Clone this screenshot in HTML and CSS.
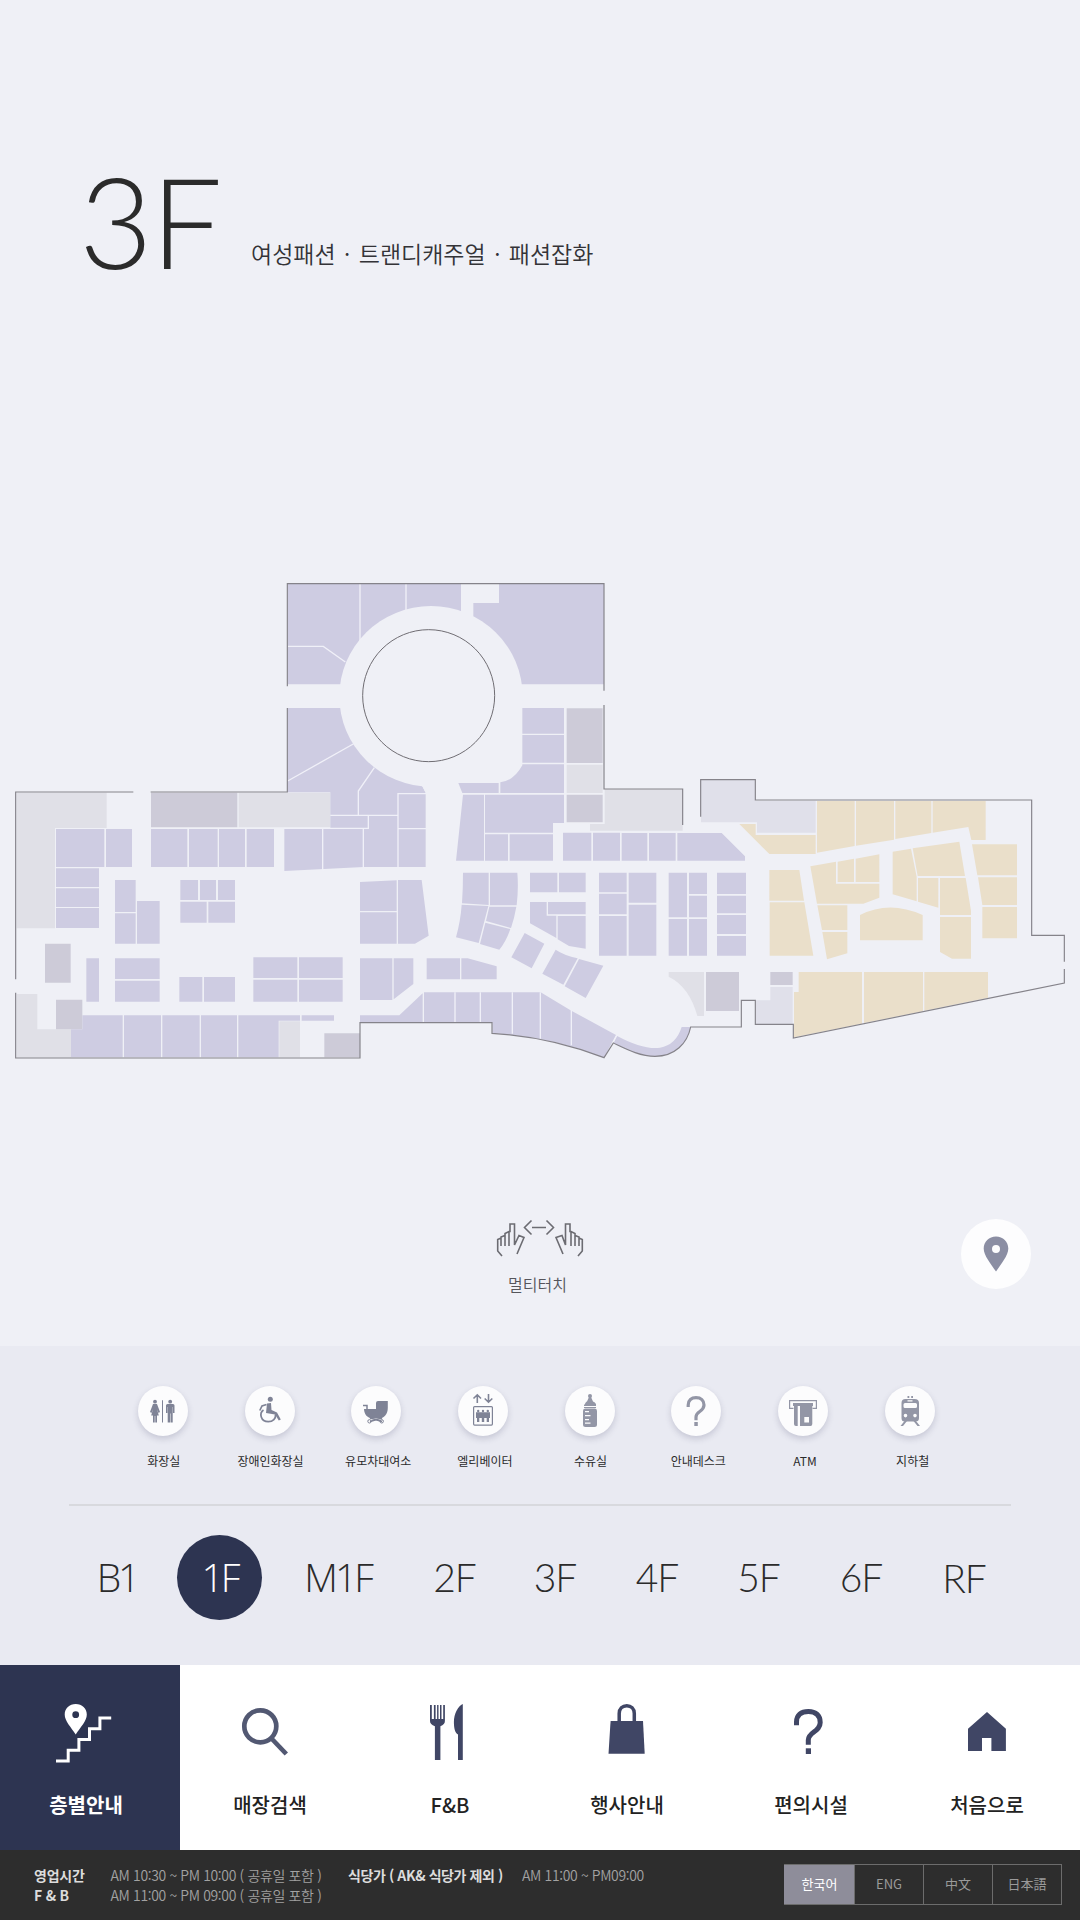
FILE: index.html
```html
<!DOCTYPE html>
<html lang="ko">
<head>
<meta charset="utf-8">
<title>층별안내 3F</title>
<link rel="stylesheet" href="styles.css">
</head>
<body>
<main class="kiosk">
  <header class="head">
    <h1 class="head-floor">3F</h1>
    <p class="head-desc">여성패션 · 트랜디캐주얼 · 패션잡화</p>
  </header>

  <svg class="map" viewBox="0 0 3240 1500">
    <!-- west wing: service areas -->
    <path class="lite" d="M50 668H320V774H165V1075H50ZM50 1272H112V1378H213V1463H50ZM716 668H991V772H716ZM838 1354H900V1462H838Z"/>
    <path class="dark" d="M453 668H712V772H453ZM135 1121H212V1238H135ZM168 1289H247V1378H168ZM973 1390H1080V1462H973Z"/>
    <!-- west wing: shops -->
    <path class="shop" d="M168 777H313V891H168ZM318 777H396V891H318ZM168 895H297V951H168ZM168 955H297V1011H168ZM168 1014H297V1074H168Z
      M453 777H562V891H453ZM567 777H653V891H567ZM657 777H735V891H657ZM740 777H822V891H740Z
      M345 930H407V1026H345ZM345 1030H407V1121H345ZM411 993H479V1121H411Z
      M541 930H594V990H541ZM600 930H648V990H600ZM654 930H705V990H654ZM541 995H620V1058H541ZM625 995H705V1058H625Z
      M259 1165H297V1295H259ZM345 1165H479V1227H345ZM345 1232H479V1295H345ZM538 1221H607V1295H538ZM612 1221H705V1295H612Z
      M760 1162H892V1224H760ZM897 1162H1028V1224H897ZM760 1229H892V1295H760ZM897 1229H1028V1295H897Z
      M247 1336H368V1462H213V1378H247ZM372 1336H483V1462H372ZM487 1336H599V1462H487ZM603 1336H711V1462H603ZM715 1336H900V1352H836V1462H715ZM905 1336H1002V1352H905Z"/>
    <!-- rotunda block -->
    <path class="shop" d="M863 42H1383V343H863ZM1497 42H1812V343H1420V99H1497ZM863 414H1265V645L1277 668V891H1091L853 903V777H991V667H863Z"/>
    <path class="gap" d="M863 229H970L1036 276M1080 42V215M1218 42V125M863 633L1065 519M1123 593L1075 663V735M991 736H1192M1105 738V775H991M853 775H991M968 777V902M1090 775V896M1194 893V671H1279M1195 776H1279"/>
    <ellipse class="floor" cx="1293" cy="379" rx="275" ry="271"/>
    <path class="floor" d="M1265 600H1400V668H1277L1265 645Z"/>
    <g transform="translate(990 0)">
      <path class="dark" d="M710 415H818V579H710ZM710 674H818V757H710Z"/>
      <path class="lite" d="M710 584H818V669H710ZM824 657H1058V782H780V762H824Z"/>
      <path class="shop" d="M577 414H702V491H577ZM577 495H702V578H577ZM577 583H702V669H511V637Q552 632 577 586ZM385 639H506V669H397ZM399 674H462V872H378ZM465 674H702V759H669V788H465ZM465 793H534V872H465ZM539 793H669V872H539Z
        M699 788H784V872H699ZM789 788H870V872H789Z
        M90 936L200 931V1023H90ZM90 1027H200V1121H90ZM204 930H275L296 1097L255 1121H204Z
        M399 908H476V1005L396 1000Q399 955 399 908ZM480 908H562Q566 955 560 1006H480ZM395 1004L475 1008L446 1119L378 1102Q392 1050 395 1004ZM478 1010H559Q553 1045 543 1074L468 1053ZM466 1058L541 1077Q528 1115 508 1139L450 1122Z
        M600 908H682V967H600ZM687 908H767V967H687ZM600 996H650V1037H679V1104L600 1060ZM654 996H767V1033H654ZM683 1038H767V1136L717 1128L683 1108Z
        M807 908H890V967H807ZM807 971H890V1033H807ZM807 1038H890V1157H807Z
        M584 1089L643 1121L605 1195L544 1162ZM677 1139Q700 1155 743 1165L700 1244L637 1211ZM747 1167L820 1187L767 1284L704 1249Z
        M90 1165H187V1290H90ZM191 1165H250V1242L191 1288ZM290 1165H390V1228H290ZM394 1165H413L500 1189V1228H394Z
        M90 1336H208L278 1270V1356H90ZM282 1267H632L724 1322L858 1395L822 1463Q660 1400 487 1390V1358H282Z"/>
      <path class="gap" d="M375 1267V1356M451 1267V1356M547 1267V1391M631 1267V1406M724 1320V1426"/>
      <circle class="wall ring" cx="296" cy="377" r="198"/>
    </g>
    <g transform="translate(1800 570)">
      <path class="lite" d="M206 636H312V768H292Q268 680 206 650Z"/>
      <path class="lite cool" d="M303 60H466V122H647V218H471V187H303ZM467 721H511V681H578V792H467Z"/>
      <path class="dark" d="M318 636H417V753H318ZM511 636H578V675H511Z"/>
      <path class="shop" d="M65 219H142V302H65ZM147 219H227V302H147ZM232 219H365L435 289V302H232Z
        M86 338H169V428H86ZM86 434H169V587H86ZM206 338H261V472H206ZM267 338H321V402H267ZM267 407H321V472H267ZM206 477H261V587H206ZM267 477H321V587H267Z
        M351 338H438V402H351ZM351 407H438V460H351ZM351 465H438V522H351ZM351 528H438V587H351Z
        M50 827Q130 870 180 863Q228 855 245 801H272C262 850 225 889 165 889C120 889 80 868 40 849Z"/>
      <path class="gold" d="M418 192H467V225H647V282H508ZM651 123H764V258L651 278ZM768 123H882V239L768 257ZM886 123H994V219L886 237ZM998 123H1157V240H1114L1105 201L998 218Z
        M508 330H598L612 422H508ZM509 427H613L640 587H509ZM631 319L708 305V371H838V413L790 431H651ZM713 305L762 296V366H713ZM767 296L838 283V366H767ZM652 436H742V510H666ZM667 516H742V580L681 598Z
        M780 465Q868 420 968 465V541H780ZM878 275L933 266L950 350V424L878 403ZM938 265L1078 245L1095 348H953ZM954 354H1015V443L954 425ZM1020 354H1097L1113 452V465H1020ZM1020 471H1113V596H1056L1020 576Z
        M1116 253H1251V346H1132ZM1134 352H1251V435H1147ZM1147 441H1251V535H1147Z
        M596 636H786V791L582 832V696H596ZM792 636H969V754L792 789ZM973 636H1164V713L973 752Z"/>
    </g>
    <path class="gap" d="M1851 1395L1839 1418"/>
    <!-- outer walls -->
    <path class="wall" d="M47 1228V666H400M452 666H862V414M862 349V41H1812V362M1812 405V657H2048V765M2102 740V629H2266V690H3095V1096H3193V1175M3193 1197V1239L2380 1404V1363H2266V1291H2224V1371H2072C2062 1420 2025 1459 1965 1459C1920 1459 1880 1438 1840 1419L1812 1463Q1650 1400 1476 1390V1358H1080V1464H47V1268"/>
  </svg>

  <section class="tools">
    <div class="multi">
      <svg class="multi-icon" width="90" height="42" viewBox="0 0 90 42">
        <path d="M7 37L2.700 32V20.500L6 19V27M6 19V18L10 16.500V27M10 16.500V14.500L14 12.500V27M14 12.500H15V5H19.500V26L24 16.500L29 18.500L22 35"/>
        <path d="M83 37L87.300 32V20.500L84 19V27M84 19V18L80 16.500V27M80 16.500V14.500L76 12.500V27M76 12.500H75V5H70.500V26L67 16.500L61 18.500L68 35"/>
        <path d="M36.500 1.500L29.500 8.500L36.500 15.500M37 8.500H51M51.500 1.500L58.500 8.500L51.500 15.500"/>
      </svg>
      <span class="multi-label">멀티터치</span>
    </div>
    <button class="locate"><svg width="26" height="36" viewBox="0 0 26 36"><path fill-rule="evenodd" d="M13 .5C6 .5 .7 5.600 .7 12.500C.7 19.500 8 28 13 35.500C18 28 25.300 19.500 25.300 12.500C25.300 5.600 20 .5 13 .5ZM13 9A4 4 0 1 1 13 17A4 4 0 1 1 13 9Z"/></svg></button>
  </section>

  <section class="panel">
    <ul class="amenities">
      <li><i class="disc"><svg viewBox="0 0 50 50"><path d="M24 14.300H25V36.500H24Z"/><circle cx="17" cy="15.700" r="1.900"/><path d="M15 18H19L22 26L20.500 27L19 23L20.800 29.500H19V36.500H17.300V30H16.700V36.500H15V29.500H13.200L15 23L13.500 27L12 26Z"/><circle cx="32.200" cy="15.700" r="1.900"/><path d="M29.500 18H35Q36.500 18 36.500 19.500V27H35V21H34.700V36.500H32.500V27.500H32V36.500H29.700V21H29.400V27H28V19.500Q28 18 29.500 18Z"/></svg></i><span class="nudge-1">화장실</span></li>
      <li><i class="disc"><svg viewBox="0 0 50 50"><circle cx="25.300" cy="13.300" r="2.500"/><path d="M22 17.500L26 17L26.500 24L32 26.500L35.800 33.500L33.800 34.500L30 28.500L21 27Z"/><path class="ln" stroke-width="1.700" d="M21.500 18.500L17 20L14.800 24.500M18.500 24C14 27 15.500 35.700 23.300 35.700C28 35.700 31 32.500 30.500 28.500"/></svg></i><span class="nudge-1">장애인화장실</span></li>
      <li><i class="disc"><svg viewBox="0 0 50 50"><path d="M25 23V17Q25 15 27 15H36.800V22C36.800 28 33 32.500 28 32.500H22C16.500 32.500 13 28 13 23Z"/><path class="ln" stroke-width="1.500" d="M12 19.500H16V23M19 35.500L31 32M19 32L31 35.500"/><circle class="ln" cx="18.500" cy="35.300" r="1.700"/><circle class="ln" cx="30.700" cy="35.300" r="1.700"/></svg></i><span class="nudge-2">유모차대여소</span></li>
      <li><i class="disc"><svg viewBox="0 0 50 50"><path class="ln" stroke-width="1.600" d="M19.300 17V9M15.500 12.500L19.300 8.800L23 12.500M30.500 8V16M26.700 12.500L30.500 16.200L34.300 12.500"/><rect class="ln" x="15.600" y="20.600" width="18.800" height="18.500" rx="1" stroke-width="1.200"/><circle cx="20.200" cy="25" r="1.200"/><circle cx="25" cy="25" r="1.200"/><circle cx="29.800" cy="25" r="1.200"/><path d="M18 26.300H32V32H31V36H28.700V32H26.200V36H23.800V32H21.300V36H19V32H18Z"/></svg></i><span class="nudge-2">엘리베이터</span></li>
      <li><i class="disc pale"><svg viewBox="0 0 50 50"><circle cx="25" cy="10" r="2"/><path d="M24 11H26L28 15.500H22ZM20 18.500Q20 16 23 15H27Q30 16 31 18V20H19V18.500ZM19 21H31V22H19Z"/><path fill-rule="evenodd" d="M20 22.500H30Q32 22.500 32 25V38.500Q32 41 29.500 41H20.500Q18 41 18 38.500V25Q18 22.500 20 22.500ZM20 25V26.300H24V25ZM20 29V30.300H25.500V29ZM20 33V34.300H24V33ZM20 36.500V37.800H25.500V36.500Z"/></svg></i><span class="nudge-1">수유실</span></li>
      <li><i class="disc pale"><svg viewBox="0 0 50 50"><path class="ln" stroke-width="3.200" d="M17.200 21V19C17.200 14 20.500 11.700 25 11.700C30 11.700 33 14.500 33 19C33 26 25 25 25 31V34.300"/><path d="M23.300 36H26.800V40H23.300Z"/></svg></i><span class="nudge-2">안내데스크</span></li>
      <li><i class="disc pale"><svg viewBox="0 0 50 50"><path class="ln" stroke-width="1.200" d="M15.500 22.400H11.600V14.600H38.400V22.400H34.500"/><path fill-rule="evenodd" d="M15 17H35V20H34.300V38Q34.300 40 32.500 40H18Q16 40 16 38V20H15ZM19.700 20V40H22V20ZM26.300 31V36.500H31V31Z"/></svg></i><span class="nudge-2">ATM</span></li>
      <li><i class="disc pale"><svg viewBox="0 0 50 50"><path fill-rule="evenodd" d="M20.500 13H29.500Q34 13 34 17V32Q34 35.500 30.500 35.500H19.500Q16.500 35.500 16.500 32V17Q16.500 13 20.500 13ZM22.500 14.200V15.500H27.500V14.200ZM20 17Q18.500 17 18.500 18.500V20.500Q18.500 22 20 22H30.500Q32 22 32 20.500V18.500Q32 17 30.500 17ZM20.500 27.800A1.800 1.800 0 1 0 20.500 31.400A1.800 1.800 0 1 0 20.500 27.800ZM30 27.800A1.800 1.800 0 1 0 30 31.400A1.800 1.800 0 1 0 30 27.800Z"/><path d="M22.500 10H24.300V12H22.500ZM26.200 10H28V12H26.200ZM19.500 35L15.500 40H18L22 35ZM31 35L35 40H32.500L28.500 35Z"/></svg></i><span class="nudge-3">지하철</span></li>
    </ul>
    <ul class="floors">
      <li class="slim">B1</li><li class="slim on">1F</li><li class="slim">M1F</li><li>2F</li><li>3F</li><li>4F</li><li>5F</li><li>6F</li><li class="roof">RF</li>
    </ul>
  </section>

  <nav class="nav">
    <a class="nav-item on"><svg viewBox="0 0 180 116"><path fill-rule="evenodd" d="M75.700 39C69.500 39 64.700 43.500 64.700 49.500C64.700 56 71 62 75.700 69.500C80.500 62 86.800 56 86.800 49.500C86.800 43.500 82 39 75.700 39ZM75.700 46.300A3.400 3.400 0 1 1 75.700 53.100A3.400 3.400 0 1 1 75.700 46.300Z"/><path class="nl" stroke-width="3" d="M56 96H68.200V85.200H78.900V74.400H89.500V63.700H99.900V53H111.200"/></svg><span class="left-4">층별안내</span></a>
    <a class="nav-item soft"><svg viewBox="0 0 180 116"><circle class="nl" cx="80.300" cy="61.300" r="16" stroke-width="4.700"/><path class="nl" stroke-width="4.700" d="M91.500 73.500L106.300 89"/></svg><span>매장검색</span></a>
    <a class="nav-item"><svg viewBox="0 0 180 116"><path d="M70 40H71.800V54H73.900V40H75.600V54H77.100V40H78.500V54H80V40H81.500V54H83.200V40H84.900V56Q84.900 59.500 80.400 61.300V95H74.900V61.300Q70 59.500 70 56ZM102.800 39V95H98V69.500C95 68 93.900 63 93.900 57C93.900 49 98 41 102.800 39Z"/></svg><span>F&amp;B</span></a>
    <a class="nav-item"><svg viewBox="0 0 180 116"><path d="M70.600 56H103L104.700 88.700H68.500Z"/><path class="nl" stroke-width="3.500" d="M79.200 57V48.500C79.200 43.500 82.500 40.700 86.800 40.700C91 40.700 94.300 43.500 94.300 48.500V57"/></svg><span class="left-3">행사안내</span></a>
    <a class="nav-item"><svg viewBox="0 0 180 116"><path class="nl" stroke-width="5" d="M76.500 60.300V57C76.500 50 81 46.500 88.400 46.500C96 46.500 100.200 50.500 100.200 57.500C100.200 67 88.300 67 88.300 75V79.700"/><path d="M85.800 83.300H91V89H85.800Z"/></svg><span class="right-1">편의시설</span></a>
    <a class="nav-item"><svg viewBox="0 0 180 116"><path d="M87 47L105.900 63.700V86H91.400V73H82V86H68V63.700Z"/></svg><span class="left-3">처음으로</span></a>
  </nav>

  <footer class="foot">
    <dl class="hours">
      <dt class="key">영업시간</dt><dd class="time">AM 10:30 ~ PM 10:00 ( 공휴일 포함 )</dd>
      <dt class="key">F &amp; B</dt><dd class="time">AM 11:00 ~ PM 09:00 ( 공휴일 포함 )</dd>
    </dl>
    <dl class="hours dining">
      <dt class="key">식당가 ( AK&amp; 식당가 제외 )</dt><dd class="time">AM 11:00 ~ PM09:00</dd>
    </dl>
    <div class="lang"><span class="on">한국어</span><span>ENG</span><span>中文</span><span>日本語</span></div>
  </footer>
</main>
</body>
</html>
```
FILE: styles.css
```css
* { box-sizing: border-box; margin: 0; padding: 0; }
body {
  width: 1080px;
  background: #eff0f6;
  color: #2b2b2b;
  font-family: "Noto Sans CJK KR", "Noto Sans", sans-serif;
}
ul { list-style: none; }
.kiosk { display: flex; flex-direction: column; width: 1080px; height: 1920px; overflow: hidden; }

.head { display: flex; height: 570px; padding: 144px 0 0 79px; }
.head-floor {
  width: 172px;
  font: 300 127px/153px Lato, sans-serif;
  letter-spacing: -2px;
}
.head-desc { padding-top: 92px; font-size: 23px; line-height: 34px; font-weight: 350; word-spacing: 2px; color: #333337; }

.map { display: block; flex: none; width: 1080px; height: 500px; }
.shop { fill: #cecce2; }
.gold { fill: #eadfca; }
.lite { fill: #e0e0e7; }
.cool { fill: #e0e0ea; }
.dark { fill: #cdcbd8; }
.floor { fill: #eff0f6; }
.gap { fill: none; stroke: #f0f0f8; stroke-width: 4; }
.wall { fill: none; stroke: #85838a; stroke-width: 3.5; }
.ring { stroke: #6f6d73; stroke-width: 3; }

.tools { display: flex; height: 276px; padding: 148.500px 49.500px 0 495px; justify-content: space-between; }
.multi { display: flex; flex-direction: column; align-items: center; width: 90px; }
.multi-icon { display: block; fill: none; stroke: #6c6c72; stroke-width: 1.6; }
.multi-label { margin: 11.500px 5px 0 0; font-size: 16px; line-height: 24px; font-weight: 350; color: #55555b; }
.locate {
  display: flex; align-items: center; justify-content: center;
  width: 70px; height: 70px; border: 0; border-radius: 50%; background: #fdfdfe; fill: #8b8ea3;
}

.panel { height: 319px; padding: 40px 69px 0; background: #e9eaf2; }
.amenities {
  display: grid; grid-template-columns: repeat(8, 106.700px);
  height: 120px; padding-left: 40.500px; border-bottom: 2px solid #d8d9de;
}
.amenities li { display: flex; flex-direction: column; align-items: center; }
.amenities span { margin-top: 16px; font-size: 12px; line-height: 18px; white-space: nowrap; }
.amenities .nudge-1 { padding-left: 2px; }
.amenities .nudge-2 { padding-left: 4px; }
.amenities .nudge-3 { padding-left: 6px; }
.disc { width: 50px; height: 50px; border-radius: 50%; background: #fcfcfd; box-shadow: 0 3px 6px rgba(60, 60, 100, .2); color: #7f8396; }
.pale { color: #9396a6; }
.disc svg { display: block; fill: currentColor; }
.ln { fill: none; stroke: currentColor; }

.floors {
  display: grid;
  grid-template-columns: 104px 104px 129px 105px 96px 108px 95px 110px 96px;
  margin: 29px 0 0 -4px;
  font: 300 39px/84px Lato, sans-serif;
  letter-spacing: -1px;
  text-align: center;
}
.floors .slim { font-family: "Open Sans", sans-serif; letter-spacing: -3px; }
.floors .on { justify-self: center; width: 85px; height: 85px; margin-left: -3px; border-radius: 50%; background: #2d3451; color: #fff; }
.floors .roof { padding-top: 1px; }

.nav { display: grid; grid-template-columns: repeat(6, 1fr); height: 185px; background: #fff; }
.nav-item { display: flex; flex-direction: column; align-items: center; fill: #404665; color: #222; }
.nav-item svg { display: block; width: 180px; height: 116px; }
.nl { fill: none; stroke: #404665; }
.nav-item span { margin-top: 9px; font-size: 20px; line-height: 30px; font-weight: 500; }
.nav-item .left-4 { padding-right: 8px; }
.nav-item .left-3 { padding-right: 6px; }
.nav-item .right-1 { padding-left: 2px; }
.soft .nl { stroke: #525872; }
.nav-item.on { background: #2d3451; color: #fff; fill: #fff; }
.nav-item.on span { font-weight: 700; }
.nav-item.on .nl { stroke: #fff; }

.foot { display: flex; height: 70px; padding: 15px 18px 0 34px; background: #2d2d2d; font-size: 14px; line-height: 20px; white-space: nowrap; }
.hours { display: grid; grid-template-columns: 76.500px auto; height: 40px; width: 314px; }
.dining { grid-template-columns: 174px auto; width: 436px; height: 20px; }
.key { font-weight: 700; color: #dcdcdc; letter-spacing: -.2px; }
.dining .key { letter-spacing: -.4px; }
.time { font-weight: 350; color: #a2a2a2; letter-spacing: -.35px; }
.lang { display: grid; grid-template-columns: 70px 69px 69px 69px; flex: none; width: 278px; height: 41px; margin-top: -1px; border: 1px solid #6c6c6c; border-left: 0; }
.lang span { border-left: 1px solid #6c6c6c; font-size: 13px; line-height: 38px; text-align: center; color: #9a9a9a; }
.lang .on { background: #8e8d9a; color: #fff; border-color: #8e8d9a; }
```
